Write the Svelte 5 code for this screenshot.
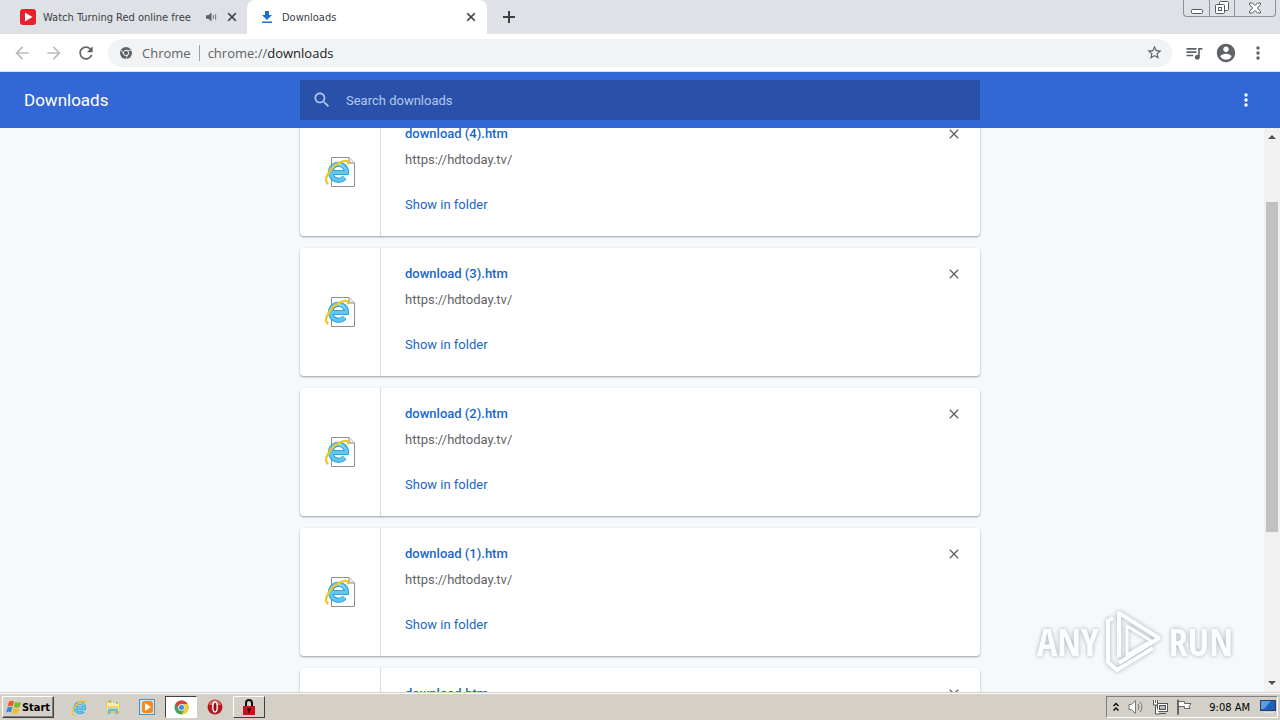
<script>
  let search = $state('');
  let address = $state('downloads');
  let downloads = $state([
    { id: 4, name: 'download (4).htm', url: 'https://hdtoday.tv/' },
    { id: 3, name: 'download (3).htm', url: 'https://hdtoday.tv/' },
    { id: 2, name: 'download (2).htm', url: 'https://hdtoday.tv/' },
    { id: 1, name: 'download (1).htm', url: 'https://hdtoday.tv/' },
    { id: 0, name: 'download.htm', url: 'https://hdtoday.tv/' }
  ]);

  const closePath =
    'M19 6.41L17.59 5 12 10.59 6.41 5 5 6.41 10.59 12 5 17.59 6.41 19 12 13.41 17.59 19 19 17.59 13.41 12z';

  function remove(id) {
    downloads = downloads.filter((d) => d.id !== id);
  }
</script>

{#snippet icon(path, size)}
  <svg width={size} height={size} viewBox="0 0 24 24" fill="currentColor"><path d={path} /></svg>
{/snippet}

{#snippet dots(size)}
  <svg width={size} height={size} viewBox="0 0 20 20" fill="currentColor">
    <circle cx="10" cy="4.5" r="1.9" /><circle cx="10" cy="10" r="1.9" /><circle cx="10" cy="15.5" r="1.9" />
  </svg>
{/snippet}

{#snippet explorer()}
  <g fill="none">
    <path d="M7 16.500H22.500A8 8 0 1 0 20.500 21.500" stroke="#2596d1" stroke-width="5" />
    <path d="M7 16.500H22.500A8 8 0 1 0 20.500 21.500" stroke="#5cc8f2" stroke-width="3.400" />
    <path d="M7.500 13q2-4.500 7-4.500 4.500 0 6.500 4" stroke="#b4eafc" stroke-width="1" />
    <path d="M3.500 27.500C-1 23 7 9 19 5.200c3.500-1 5.500-.2 5 2.300" stroke="#f3c51c" stroke-width="2.200" stroke-linecap="round" />
  </g>
{/snippet}

<div class="screen">
  <header class="tabs">
    <div class="tab">
      <svg width="16" height="16" viewBox="0 0 16 16"><rect width="16" height="16" rx="3" fill="#e9202b" /><path d="M5 3.500v9L12.500 8z" fill="#fff" /></svg>
      <span class="tab-title">Watch Turning Red online free</span>
      <svg width="11" height="12" viewBox="0 0 12 12" fill="#5f6368"><path d="M0 4h2.500L6 1v10L2.500 8H0z" /><path d="M8 4v4M10.500 3v6" stroke="#5f6368" /></svg>
      <button class="tab-close" aria-label="Close tab">{@render icon(closePath, 14)}</button>
    </div>
    <div class="tab active">
      <svg width="16" height="16" viewBox="0 0 16 16" fill="#1a73c8"><path d="M6 2h4v4h3l-5 5-5-5h3zM3 12.500h10V14H3z" /></svg>
      <span class="tab-title">Downloads</span>
      <button class="tab-close" aria-label="Close tab">{@render icon(closePath, 14)}</button>
    </div>
    <button class="new-tab" aria-label="New tab">
      <svg width="12" height="12" viewBox="0 0 12 12" stroke="#3c4043" stroke-width="2"><path d="M6 0v12M0 6h12" /></svg>
    </button>
    <div class="window-buttons">
      <button aria-label="Minimize">
        <svg width="12" height="12" viewBox="0 0 12 12" fill="#fff" stroke="#555a60"><rect x=".5" y="7.500" width="11" height="4" rx="1" /></svg>
      </button>
      <button aria-label="Restore">
        <svg width="14" height="14" viewBox="0 0 14 14" fill="#fff" stroke="#555a60"><rect x="4.500" y=".5" width="9" height="9" rx="1" /><rect x=".5" y="3.500" width="9" height="9" rx="1" /><rect x="3.500" y="6.500" width="3" height="3" /></svg>
      </button>
      <button class="close" aria-label="Close">
        <svg width="14" height="12" viewBox="0 0 14 12" fill="#fff" stroke="#555a60"><path d="M1.500 1h3L7 3.500 9.500 1h3v1.500L9.500 6l3 3.500V11h-3L7 8.500 4.500 11h-3V9.500l3-3.500-3-3.500z" /></svg>
      </button>
    </div>
  </header>

  <nav class="toolbar">
    <button class="muted" aria-label="Back">{@render icon('M20 11H7.830l5.590-5.590L12 4l-8 8 8 8 1.410-1.410L7.830 13H20v-2z', 20)}</button>
    <button class="muted" aria-label="Forward">{@render icon('M12 4l-1.410 1.410L16.170 11H4v2h12.170l-5.580 5.590L12 20l8-8z', 20)}</button>
    <button aria-label="Reload">{@render icon('M17.650 6.350C16.200 4.900 14.210 4 12 4c-4.420 0-7.990 3.580-7.990 8s3.570 8 7.990 8c3.730 0 6.840-2.550 7.730-6h-2.080c-.82 2.330-3.040 4-5.650 4-3.310 0-6-2.690-6-6s2.690-6 6-6c1.660 0 3.140.69 4.220 1.780L13 11h7V4l-2.350 2.350z', 20)}</button>
    <div class="omnibox">
      <svg width="12" height="12" viewBox="0 0 12 12"><circle cx="6" cy="6" r="6" fill="#5f6368" /><circle cx="6" cy="6" r="2.600" fill="#5f6368" stroke="#f1f3f4" /><path d="M6 3.400h5.300M3.700 7.300L1.200 3M8.300 7.300L5.800 11.700" stroke="#f1f3f4" stroke-width=".8" /></svg>
      <span class="site">Chrome</span>
      <label class="address">
        <span>chrome://</span>
        <input aria-label="Address" bind:value={address} />
      </label>
      <button aria-label="Bookmark this page">{@render icon('M22 9.240l-7.190-.62L12 2 9.190 8.630 2 9.240l5.460 4.730L5.820 21 12 17.270 18.180 21l-1.630-7.030L22 9.240zM12 15.400l-3.760 2.270 1-4.280-3.320-2.880 4.380-.38L12 6.100l1.710 4.040 4.380.38-3.320 2.880 1 4.280L12 15.400z', 17)}</button>
    </div>
    <button aria-label="Media">{@render icon('M15 6H3v2h12V6zm0 4H3v2h12v-2zM3 16h8v-2H3v2zM17 6v8.180c-.31-.11-.65-.18-1-.18-1.660 0-3 1.340-3 3s1.340 3 3 3 3-1.340 3-3V8h3V6h-5z', 20)}</button>
    <button aria-label="Profile">{@render icon('M12 2C6.480 2 2 6.480 2 12s4.480 10 10 10 10-4.480 10-10S17.520 2 12 2zm0 3c1.660 0 3 1.340 3 3s-1.340 3-3 3-3-1.340-3-3 1.340-3 3-3zm0 14.200c-2.500 0-4.710-1.280-6-3.220.03-1.990 4-3.080 6-3.080 1.990 0 5.970 1.090 6 3.080-1.290 1.940-3.500 3.220-6 3.220z', 22)}</button>
    <button aria-label="Menu">{@render dots(18)}</button>
  </nav>

  <div class="page-header">
    <h1>Downloads</h1>
    <label class="search">
      {@render icon('M15.500 14h-.79l-.28-.27C15.410 12.590 16 11.110 16 9.500 16 5.910 13.090 3 9.500 3S3 5.910 3 9.500 5.910 16 9.500 16c1.610 0 3.090-.59 4.230-1.570l.27.28v.79l5 4.990L20.490 19l-4.990-5zm-6 0C7.010 14 5 11.990 5 9.500S7.010 5 9.500 5 14 7.010 14 9.500 11.990 14 9.500 14z', 20)}
      <input type="text" placeholder="Search downloads" aria-label="Search downloads" bind:value={search} />
    </label>
    <div class="actions">
      <button aria-label="More actions">{@render dots(18)}</button>
    </div>
  </div>

  <div class="content">
    <main>
      <ul>
        {#each downloads as item (item.id)}
          <li class="card">
            <div class="file-icon">
              <svg width="32" height="32" viewBox="0 0 32 32">
                <path d="M7.500 1.500H25L30.500 7v23.500h-23z" fill="#fff" stroke="#8d8d8d" />
                <path d="M25 1.500V7h5.500" fill="#eee" stroke="#8d8d8d" />
                {@render explorer()}
              </svg>
            </div>
            <div class="details">
              <a class="name" href="#file">{item.name}</a>
              <a class="url" href={item.url}>{item.url}</a>
              <a class="show" href="#folder">Show in folder</a>
            </div>
            <button class="remove" aria-label="Remove from list" onclick={() => remove(item.id)}>{@render icon(closePath, 16)}</button>
          </li>
        {/each}
      </ul>
    </main>
    <div class="scrollbar">
      <svg width="16" height="16" viewBox="0 0 16 16"><path d="M4 11l4-4 4 4z" fill="#505050" /></svg>
      <div class="track"><div class="thumb"></div></div>
      <svg width="16" height="16" viewBox="0 0 16 16"><path d="M4 5l4 4 4-4z" fill="#505050" /></svg>
    </div>
    <div class="watermark">
      <span>ANY</span>
      <svg width="58" height="64" viewBox="0 0 58 64" fill="none" stroke="#fff" stroke-width="4" stroke-linejoin="round">
        <path d="M14 48V4l40 25L14 54" />
        <path d="M14 4l40 25-6 4-26-16v29l22-13" stroke-width="3" />
        <path d="M8 9L3 12v41l9 8 36-22" stroke-width="4" />
      </svg>
      <span>RUN</span>
    </div>
  </div>

  <footer class="taskbar">
    <button class="start">
      <svg width="16" height="16" viewBox="0 0 16 16"><path d="M3 2.500q2.500-1.500 5 0L6.700 7.500q-2.300-1.400-5 0z" fill="#ee5a24" /><path d="M9 3q2.500 1.500 6 0l-1.500 5q-2.800 1.400-5.500 0z" fill="#78b829" /><path d="M1.400 8.500q2.700-1.400 5 0L5 13.500q-2.300-1.500-5 0z" fill="#348ede" /><path d="M7.600 9q2.700 1.500 5.500 0l-1.400 5q-2.700 1.500-5.500 0z" fill="#f6bd19" /></svg>
      Start
    </button>
    <div class="apps">
      <button class="app" aria-label="Internet Explorer">
        <svg width="17" height="17" viewBox="0 2 28 27">{@render explorer()}</svg>
      </button>
      <button class="app" aria-label="Explorer">
        <svg width="16" height="16" viewBox="0 0 16 16"><path d="M1 2h5l1 2h8v10H1z" fill="#e8c75b" /><path d="M2 4h12v8H2z" fill="#fbedaa" /><path d="M1 7h14v2H1z" fill="#f0d56e" /><path d="M3 15V9.500h10V15h-2.500v-3h-5v3z" fill="#68b9df" /><path d="M4 2h2M11 4h2" stroke="#3fab60" /></svg>
      </button>
      <button class="app" aria-label="Media Player">
        <svg width="16" height="16" viewBox="0 0 16 16"><rect x=".5" y=".5" width="15" height="15" fill="#c9e5f6" stroke="#4e91bd" /><rect x="3" y="2" width="11" height="12" rx="3" fill="#f28a18" /><path d="M6 4v8l6-4z" fill="#fff" /></svg>
      </button>
      <button class="app pressed" aria-label="Chrome">
        <svg width="15" height="15" viewBox="0 0 16 16"><circle cx="8" cy="8" r="7.500" fill="#3fa652" /><path d="M1.500 4.250A7.500 7.500 0 0 1 14.500 4.250H8A3.750 3.750 0 0 0 4.700 9.800z" fill="#de4034" /><path d="M14.500 4.250A7.500 7.500 0 0 1 8 15.500l3.250-5.600A3.750 3.750 0 0 0 8 4.250z" fill="#fbcc2b" /><circle cx="8" cy="8" r="3.300" fill="#4587e8" stroke="#fff" /></svg>
      </button>
      <button class="app" aria-label="Opera">
        <svg width="16" height="16" viewBox="0 0 16 16"><circle cx="8" cy="8" r="7.500" fill="#b51a20" /><path d="M2 6a6 5 0 0 1 12 0" fill="#dc6262" /><ellipse cx="8" cy="8" rx="2.200" ry="5" fill="#8a1015" stroke="#fff" stroke-width="1.400" /></svg>
      </button>
      <button class="app raised" aria-label="Lock">
        <svg width="14" height="16" viewBox="0 0 14 16"><path d="M4 8V4a3 3 0 0 1 6 0v4" fill="none" stroke="#111" stroke-width="2" /><rect x="1" y="7" width="12" height="9" fill="#c8101c" /><path d="M7 9v5M5 10.500h4" stroke="#300" stroke-width="1.500" /></svg>
      </button>
    </div>
    <div class="tray">
      <svg width="8" height="12" viewBox="0 0 8 12" fill="none" stroke="#111" stroke-width="1.500"><path d="M1.500 5L4 2.500 6.500 5M1.500 9.500L4 7l2.500 2.500" /></svg>
      <svg width="16" height="16" viewBox="0 0 16 16" fill="#fff" stroke="#777"><path d="M1 5.500h2.500L7.500 1.500v13l-4-4H1z" /><path d="M10 5q2 3 0 6M12 3q4 5 0 10" fill="none" /></svg>
      <svg width="16" height="16" viewBox="0 0 16 16" fill="#fff" stroke="#555"><rect x="5.500" y="4.500" width="10" height="8" /><rect x="7.500" y="6.500" width="6" height="4" fill="#b8b8b8" /><path d="M7 14.500h7M3.500 6v9h4M1.500 1v5h4V1M3.500 1v3" /></svg>
      <svg width="17" height="16" viewBox="0 0 17 16" fill="#fff" stroke="#666"><path d="M1.500 1v14.500h1V1zM2.500 2.500h6v2H15l-2 3 1 2H8.500v-2h-6z" /></svg>
      <time>9:08 AM</time>
      <svg width="16" height="14" viewBox="0 0 16 14"><rect x=".5" y=".5" width="15" height="10" fill="#215dba" stroke="#224268" /><path d="M1 1h10L4 9H1z" fill="#5b9be5" /><path d="M3 12.500h10" stroke="#d9e6f3" /></svg>
    </div>
  </footer>
</div>

<style>
  :global(body) {
    margin: 0;
  }

  .screen {
    display: flex;
    flex-direction: column;
    height: 100vh;
    overflow: hidden;
    font-family: Roboto, sans-serif;
    font-size: 13px;
    background: #f6f9fc;
  }

  button {
    display: flex;
    align-items: center;
    justify-content: center;
    padding: 0;
    border: none;
    background: none;
    color: inherit;
    cursor: pointer;
  }

  svg {
    flex-shrink: 0;
  }

  .tabs {
    display: flex;
    height: 34px;
    padding-left: 8px;
    background: #dee1e6;
    font: 11px "DejaVu Sans Condensed", "DejaVu Sans", sans-serif;
    color: #3c4043;
  }

  .tab {
    display: flex;
    align-items: center;
    gap: 7px;
    box-sizing: border-box;
    width: 239px;
    padding: 0 7px 0 12px;
  }

  .tab.active {
    width: 240px;
    padding-right: 8px;
    background: #fff;
    border-radius: 8px 8px 0 0;
  }

  .tab-title {
    flex: 1;
    white-space: nowrap;
    overflow: hidden;
  }

  .tab-close {
    width: 16px;
    height: 16px;
  }

  .tab-close svg {
    stroke: currentColor;
  }

  .new-tab {
    width: 28px;
    margin-left: 8px;
  }

  .window-buttons {
    display: flex;
    box-sizing: border-box;
    height: 17px;
    margin: 0 4px 0 auto;
    border: 1px solid #8d9299;
    border-top: none;
    border-radius: 0 0 4px 4px;
  }

  .window-buttons button {
    width: 25px;
  }

  .window-buttons button + button {
    border-left: 1px solid #8d9299;
  }

  .window-buttons .close {
    width: 41px;
  }

  .toolbar {
    display: flex;
    align-items: center;
    gap: 4px;
    height: 37px;
    padding: 0 8px;
    border-bottom: 1px solid #d5e3e6;
    background: #fff;
    color: #5f6368;
  }

  .toolbar > button {
    width: 28px;
    height: 28px;
  }

  .toolbar .muted {
    color: #babcbe;
  }

  .omnibox {
    flex: 1;
    display: flex;
    align-items: center;
    height: 28px;
    padding: 0 9px 0 12px;
    margin: 0 4px;
    border-radius: 14px;
    background: #f1f3f4;
    font: 13px "Open Sans", sans-serif;
  }

  .site {
    margin-left: 10px;
    padding-right: 8px;
    border-right: 1px solid #9aa0a6;
    line-height: 16px;
  }

  .address {
    flex: 1;
    display: flex;
    align-items: center;
    padding-left: 8px;
    line-height: 16px;
  }

  .address input {
    flex: 1;
    height: 16px;
    padding: 0;
    border: none;
    outline: none;
    background: none;
    font: inherit;
    color: #202124;
  }

  .page-header {
    display: grid;
    grid-template-columns: 1fr minmax(0, 680px) 1fr;
    align-items: center;
    height: 56px;
    background: #3367d6;
    color: #fff;
  }

  h1 {
    margin: 0 0 0 24px;
    font-size: 17px;
    font-weight: 400;
  }

  .search {
    display: flex;
    align-items: center;
    height: 40px;
    padding-left: 12px;
    background: #2951a9;
    color: #b4c7f1;
  }

  .search input {
    flex: 1;
    margin-left: 14px;
    padding: 0;
    border: none;
    outline: none;
    background: none;
    font: inherit;
    color: #fff;
  }

  .search input::placeholder {
    color: #b4c7f1;
  }

  .actions {
    display: flex;
    justify-content: flex-end;
    padding-right: 20px;
  }

  .actions button {
    width: 28px;
    height: 28px;
  }

  .content {
    position: relative;
    flex: 1;
    display: flex;
    min-height: 0;
    overflow: hidden;
  }

  main {
    flex: 1;
    padding-left: 16px;
  }

  ul {
    display: flex;
    flex-direction: column;
    gap: 12px;
    max-width: 680px;
    margin: -20px auto 0;
    padding: 0;
    list-style: none;
  }

  .card {
    display: flex;
    height: 128px;
    border-radius: 4px;
    background: #fff;
    box-shadow: 0 1px 2px rgba(60, 64, 67, 0.5);
  }

  .file-icon {
    display: flex;
    align-items: center;
    justify-content: center;
    width: 80px;
    border-right: 1px solid #d8dadc;
  }

  .details {
    flex: 1;
    display: flex;
    flex-direction: column;
    align-items: flex-start;
    padding: 16px 24px 0;
    line-height: 20px;
  }

  .details a {
    color: #1967c8;
    text-decoration: none;
  }

  .details .name {
    font-weight: 500;
  }

  .details .url {
    margin-top: 6px;
    color: #5f6368;
  }

  .details .show {
    margin-top: 25px;
  }

  .remove {
    width: 20px;
    height: 20px;
    margin: 16px 16px 0 0;
    color: #5f6368;
  }

  .scrollbar {
    display: flex;
    flex-direction: column;
    width: 16px;
    background: #f1f1f1;
  }

  .track {
    flex: 1;
    padding: 0 2px;
  }

  .thumb {
    height: 62%;
    margin-top: 58px;
    background: #c1c1c1;
  }

  .watermark {
    position: absolute;
    right: 47px;
    bottom: 19px;
    display: flex;
    align-items: center;
    gap: 6px;
    font: bold 38px "Liberation Sans Narrow", "Open Sans Condensed", sans-serif;
    color: #fff;
    opacity: 0.7;
    filter: drop-shadow(0 0 2px #888);
    pointer-events: none;
  }

  .taskbar {
    display: flex;
    align-items: center;
    box-sizing: border-box;
    height: 28px;
    padding: 1px 2px 0;
    border-top: 1px solid #d4d0c8;
    box-shadow: inset 0 1px #fff;
    background: #d4d0c8;
    font: 11px "DejaVu Sans Condensed", "DejaVu Sans", sans-serif;
    color: #000;
  }

  .start {
    box-sizing: border-box;
    height: 22px;
    width: 52px;
    border: 1px solid;
    border-color: #fff #404040 #404040 #fff;
    box-shadow: inset -1px -1px #808080;
    font: bold 11px "DejaVu Sans Condensed", "DejaVu Sans", sans-serif;
  }

  .apps {
    display: flex;
    gap: 2px;
    margin-left: 9px;
  }

  .app {
    box-sizing: border-box;
    width: 32px;
    height: 22px;
  }

  .pressed {
    border: 1px solid;
    border-color: #404040 #fff #fff #404040;
    background: #fff;
  }

  .raised {
    border: 1px solid;
    border-color: #fff #404040 #404040 #fff;
  }

  .tray {
    display: flex;
    align-items: center;
    gap: 8px;
    box-sizing: border-box;
    height: 22px;
    margin-left: auto;
    padding: 0 1px 0 5px;
    border: 1px solid;
    border-color: #808080 #fff #fff #808080;
  }

  time {
    margin: 0 2px 0 8px;
  }
</style>
